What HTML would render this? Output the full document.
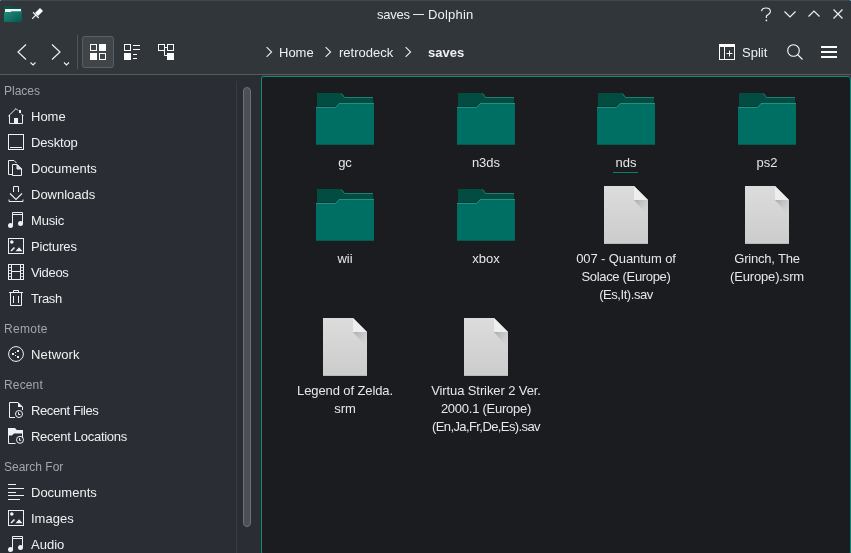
<!DOCTYPE html>
<html><head><meta charset="utf-8">
<style>
html,body{margin:0;padding:0;}
body{width:851px;height:553px;overflow:hidden;position:relative;background:#31363b;font-family:"Liberation Sans",sans-serif;color:#eff0f1;font-size:13px;}
.a{position:absolute;}
.t{position:absolute;white-space:nowrap;line-height:1;will-change:transform;}
svg{position:absolute;overflow:visible;}
#side{position:absolute;left:0;top:75px;width:261px;height:478px;background:#2a2d34;}
#view{position:absolute;left:261px;top:76px;width:588px;height:477px;border:1px solid #0d8c7b;border-radius:3px;background:#1b1c20;}
.hdr{color:#a2a7ab;}
.lbl{will-change:transform;position:absolute;text-align:center;width:140px;line-height:18px;white-space:nowrap;color:#e6e7e8;}
</style></head><body>
<svg width="0" height="0" style="position:absolute">
 <defs>
  <linearGradient id="fg" x1="0" y1="0" x2="0" y2="1"><stop offset="0" stop-color="#dcdcdc"/><stop offset="1" stop-color="#cccccc"/></linearGradient>
  <linearGradient id="sh" x1="0" y1="0" x2="1" y2="1"><stop offset="0" stop-color="#a8a8a8"/><stop offset="1" stop-color="#d4d4d4" stop-opacity="0"/></linearGradient>
  <symbol id="folder" viewBox="0 0 58 52">
   <path d="M1 0H25.5L28.5 4H57V52H1z" fill="#024c42"/>
   <path d="M25.5 0.5L28.5 4.5H57" fill="none" stroke="#237e72" stroke-width="1"/>
   <path d="M0 14H19.3L22.8 10H58V52H0z" fill="#006f63"/>
   <path d="M0 14.5H19.5L23 10.5H58" fill="none" stroke="#2a8d80" stroke-width="1"/>
   <path d="M0 13.5H19L22.5 9.5" fill="none" stroke="#013d35" stroke-width="1"/>
   <rect x="0" y="51" width="58" height="1" fill="#035a50"/>
  </symbol>
  <symbol id="file" viewBox="0 0 44 58">
   <path d="M0 0H30L44 14V58H0z" fill="url(#fg)"/>
   <path d="M30 14H44V30z" fill="url(#sh)"/>
   <path d="M30 0L44 14H30z" fill="#eeeeee"/>
   <rect x="0" y="57" width="44" height="1" fill="#b8b8b8"/>
  </symbol>
 </defs>
</svg>

<!-- top outline -->
<div class="a" style="left:0;top:0;width:851px;height:1px;background:#42474d"></div>
<div class="a" style="left:0;top:0;width:1px;height:1px;background:#5592b8"></div>
<div class="a" style="left:850px;top:0;width:1px;height:1px;background:#6aa3bd"></div>

<!-- title bar -->
<svg style="left:4px;top:6px" width="18" height="16" viewBox="0 0 18 16">
  <defs><linearGradient id="tf" x1="0" y1="0" x2="1" y2="1"><stop offset="0" stop-color="#1f8e7e"/><stop offset="1" stop-color="#06564c"/></linearGradient></defs>
  <path d="M0 0h8l1 1.2H18V16H0z" fill="#0a5349"/>
  <rect x="1" y="3" width="16" height="3.2" fill="#f2f2f2"/>
  <path d="M0 6.3H6.5L7.5 5.2H18V16H0z" fill="url(#tf)"/>
</svg>
<svg style="left:28px;top:4px" width="20" height="20" viewBox="0 0 20 20">
  <path d="M9.98 11.98L7.02 9.02L12.02 4.02L14.98 6.98z" fill="#fcfcfc"/>
  <path d="M5.4 8.6L10.4 13.6" stroke="#fcfcfc" stroke-width="1.3" stroke-linecap="round"/>
  <path d="M7.8 11.2L4.6 14.4" stroke="#fcfcfc" stroke-width="1.2" stroke-linecap="round"/>
</svg>
<div class="t" style="left:377px;top:8px;font-size:13px;letter-spacing:-0.25px">saves</div>
<div class="a" style="left:413px;top:14px;width:11px;height:1px;background:#e3e5e6"></div>
<div class="t" style="left:428px;top:8px;font-size:13px;letter-spacing:0.2px">Dolphin</div>
<svg style="left:760px;top:7px" width="12" height="15" viewBox="0 0 12 15"><path d="M1.6 4.2C1.6 2 3.6 1 6 1C8.5 1 10.4 2.3 10.4 4.5C10.4 6.8 7.9 7.5 6.4 9V11" fill="none" stroke="#eff0f1" stroke-width="1.15"/><circle cx="6.4" cy="13.4" r="0.85" fill="#eff0f1"/></svg>
<svg style="left:784px;top:11px" width="12" height="7" viewBox="0 0 12 7"><path d="M0.5 0.5L6 6 11.5 0.5" fill="none" stroke="#eff0f1" stroke-width="1.2"/></svg>
<svg style="left:808px;top:10px" width="12" height="7" viewBox="0 0 12 7"><path d="M0.5 6.5L6 1 11.5 6.5" fill="none" stroke="#eff0f1" stroke-width="1.2"/></svg>
<svg style="left:833px;top:9px" width="10" height="10" viewBox="0 0 10 10"><path d="M0.5 0.5L9.5 9.5M9.5 0.5L0.5 9.5" fill="none" stroke="#eff0f1" stroke-width="1.2"/></svg>

<!-- toolbar -->
<svg style="left:17px;top:44px" width="20" height="22" viewBox="0 0 20 22">
  <path d="M9 0.5L1 8l8 7.5" fill="none" stroke="#eff0f1" stroke-width="1.2"/>
  <path d="M13.5 18.5L16 21l2.5-2.5" fill="none" stroke="#eff0f1" stroke-width="1.1"/>
</svg>
<svg style="left:51px;top:44px" width="20" height="22" viewBox="0 0 20 22">
  <path d="M1 0.5L9 8l-8 7.5" fill="none" stroke="#eff0f1" stroke-width="1.2"/>
  <path d="M13 18.5L15.5 21l2.5-2.5" fill="none" stroke="#eff0f1" stroke-width="1.1"/>
</svg>
<div class="a" style="left:77px;top:35px;width:1px;height:34px;background:#50555a"></div>
<div class="a" style="left:82px;top:36px;width:30px;height:30px;border:1px solid #5b5f64;border-radius:3px;background:#40454a"></div>
<svg style="left:90px;top:44px" width="16" height="16" viewBox="0 0 16 16">
  <rect x="0.5" y="0.5" width="6" height="6" fill="none" stroke="#fcfcfc"/>
  <rect x="9" y="0" width="7" height="7" fill="#fcfcfc"/>
  <rect x="0" y="9" width="7" height="7" fill="#fcfcfc"/>
  <rect x="9.5" y="9.5" width="6" height="6" fill="none" stroke="#fcfcfc"/>
</svg>
<svg style="left:124px;top:44px" width="16" height="16" viewBox="0 0 16 16">
  <rect x="0.5" y="0.5" width="6" height="6" fill="none" stroke="#fcfcfc"/>
  <rect x="9" y="1" width="7" height="1" fill="#fcfcfc"/>
  <rect x="9" y="5" width="7" height="1" fill="#fcfcfc"/>
  <rect x="0" y="9" width="7" height="7" fill="#fcfcfc"/>
  <rect x="9" y="10" width="4" height="1" fill="#fcfcfc"/>
  <rect x="9" y="14" width="4" height="1" fill="#fcfcfc"/>
</svg>
<svg style="left:158px;top:44px" width="16" height="16" viewBox="0 0 16 16">
  <rect x="0.5" y="0.5" width="6" height="6" fill="none" stroke="#fcfcfc"/>
  <rect x="9.5" y="0.5" width="6" height="6" fill="none" stroke="#fcfcfc"/>
  <path d="M6.5 3.5h3M6.5 3.5v8h3" fill="none" stroke="#fcfcfc"/>
  <rect x="9" y="9" width="7" height="7" fill="#fcfcfc"/>
</svg>

<!-- breadcrumb -->
<svg style="left:266px;top:46px" width="7" height="12" viewBox="0 0 7 12"><path d="M0.6 1.2L5.6 6 0.6 10.8" fill="none" stroke="#e6e8e9" stroke-width="1.15"/></svg>
<div class="t" style="left:279px;top:46px">Home</div>
<svg style="left:325px;top:46px" width="7" height="12" viewBox="0 0 7 12"><path d="M0.6 1.2L5.6 6 0.6 10.8" fill="none" stroke="#e6e8e9" stroke-width="1.15"/></svg>
<div class="t" style="left:339px;top:46px">retrodeck</div>
<svg style="left:405px;top:46px" width="7" height="12" viewBox="0 0 7 12"><path d="M0.6 1.2L5.6 6 0.6 10.8" fill="none" stroke="#e6e8e9" stroke-width="1.15"/></svg>
<div class="t" style="left:428px;top:46px;font-weight:bold">saves</div>

<!-- split / search / menu -->
<svg style="left:719px;top:44px" width="16" height="16" viewBox="0 0 16 16">
  <rect x="0.5" y="0.5" width="15" height="15" fill="none" stroke="#fcfcfc"/>
  <rect x="0" y="0" width="16" height="3" fill="#fcfcfc"/>
  <rect x="5" y="3" width="1" height="13" fill="#fcfcfc"/>
  <path d="M10.5 6.5v6M7.5 9.5h6" stroke="#fcfcfc"/>
</svg>
<div class="t" style="left:742px;top:46px">Split</div>
<svg style="left:787px;top:44px" width="16" height="16" viewBox="0 0 16 16">
  <circle cx="6.5" cy="6.5" r="5.8" fill="none" stroke="#fcfcfc" stroke-width="1.1"/>
  <path d="M10.5 10.5L15.5 15.5" stroke="#fcfcfc" stroke-width="1.1"/>
</svg>
<svg style="left:821px;top:45px" width="16" height="14" viewBox="0 0 16 14">
  <rect x="0" y="1" width="16" height="2" fill="#fcfcfc"/>
  <rect x="0" y="6" width="16" height="2" fill="#fcfcfc"/>
  <rect x="0" y="11" width="16" height="2" fill="#fcfcfc"/>
</svg>

<!-- toolbar bottom line -->
<div class="a" style="left:0;top:74px;width:851px;height:1px;background:#575b60"></div>

<!-- sidebar -->
<div id="side"></div>
<div class="a" style="left:236px;top:81px;width:1px;height:472px;background:#393d42"></div>
<div class="a" style="left:243px;top:87px;width:6px;height:438px;border:1px solid #6d7175;border-radius:4px;background:#4c5055"></div>

<!-- sidebar icons -->
<svg style="left:8px;top:108px" width="16" height="16" viewBox="0 0 16 16" fill="none" stroke="#eff0f1" stroke-width="1"><path d="M0.3 8.2L8 0.6L10 2.6M13.2 5.8L15.4 8"/><path d="M1.5 7V15.5H14.5V7"/><rect x="6" y="10" width="4" height="6" fill="#eff0f1" stroke="none"/><rect x="11" y="2" width="2" height="3" fill="#eff0f1" stroke="none"/></svg>
<svg style="left:8px;top:134px" width="16" height="16" viewBox="0 0 16 16" fill="none" stroke="#eff0f1" stroke-width="1"><rect x="0.5" y="0.5" width="15" height="15"/><path d="M2 13.5H14"/></svg>
<svg style="left:8px;top:160px" width="16" height="16" viewBox="0 0 16 16" fill="none" stroke="#eff0f1" stroke-width="1"><path d="M4.5 14.5H0.5V0.5H6L8.5 3"/><path d="M4.5 15.5V4.5H9L13.5 9V15.5z"/><path d="M9 4.5V9H13.5z" fill="#eff0f1" fill-opacity="0.85"/></svg>
<svg style="left:8px;top:186px" width="16" height="16" viewBox="0 0 16 16" fill="none" stroke="#eff0f1" stroke-width="1"><path d="M5.5 6V0.5H10.5V6"/><path d="M2 7.5L8 13.5L14 7.5" stroke-width="1.1"/><path d="M1 13.5V15.5H15V13.5"/></svg>
<svg style="left:8px;top:212px" width="16" height="16" viewBox="0 0 16 16" fill="none" stroke="#eff0f1" stroke-width="1"><path d="M4.5 13.5V0.5H14.5V11.5M4.5 2.5H14.5"/><circle cx="2.5" cy="13.5" r="2.5" fill="#eff0f1" stroke="none"/><circle cx="12.5" cy="11.5" r="2.5" fill="#eff0f1" stroke="none"/></svg>
<svg style="left:8px;top:238px" width="16" height="16" viewBox="0 0 16 16" fill="none" stroke="#eff0f1" stroke-width="1"><rect x="0.5" y="0.5" width="15" height="15"/><circle cx="3.8" cy="4" r="1.8" fill="#eff0f1" stroke="none"/><path d="M3 13L6.5 9.5" stroke-width="1.6"/><path d="M7.5 13.3L11 9.3L14.5 13.3z" fill="#eff0f1" stroke="none"/></svg>
<svg style="left:8px;top:264px" width="16" height="16" viewBox="0 0 16 16" fill="none" stroke="#eff0f1" stroke-width="1"><rect x="0.5" y="0.5" width="15" height="15"/><path d="M3.5 0.5V15.5M12.5 0.5V15.5M3.5 7.5H12.5"/><path d="M1 3.5H3M1 6.5H3M1 9.5H3M1 12.5H3M13 3.5H15M13 6.5H15M13 9.5H15M13 12.5H15" stroke-width="0.8"/></svg>
<svg style="left:8px;top:290px" width="16" height="16" viewBox="0 0 16 16" fill="none" stroke="#eff0f1" stroke-width="1"><path d="M1 2.5H15"/><path d="M5.5 2V0.5H10.5V2"/><path d="M2.5 3V15.5H13.5V3"/><path d="M5.5 6V13M10.5 6V13"/></svg>
<svg style="left:8px;top:346px" width="16" height="16" viewBox="0 0 16 16" fill="none" stroke="#eff0f1" stroke-width="1"><circle cx="8" cy="8" r="7.4"/><g fill="#eff0f1" stroke="none"><rect x="4" y="7" width="2" height="2"/><rect x="9" y="4" width="2" height="2"/><rect x="9" y="10" width="2" height="2"/><rect x="7" y="6" width="1" height="1"/><rect x="7" y="9" width="1" height="1"/></g></svg>
<svg style="left:8px;top:402px" width="16" height="16" viewBox="0 0 16 16" fill="none" stroke="#eff0f1" stroke-width="1"><path d="M7 15.5H1.5V0.5H10L14.5 5V8"/><path d="M10 0.5V5H14.5z" fill="#eff0f1" stroke="none"/><circle cx="11" cy="12" r="3.5"/><path d="M10.5 10.2V12.5H12.3"/></svg>
<svg style="left:8px;top:428px" width="16" height="16" viewBox="0 0 16 16" fill="none" stroke="#eff0f1" stroke-width="1"><path d="M0 0H7L8.8 2H15V5.5H6L4 7.5H0z" fill="#eff0f1" stroke="none"/><path d="M0.5 7V15.5H7.5M14.5 5V10"/><circle cx="12" cy="11.8" r="3.5"/><path d="M11.5 10V12.3H13.2"/></svg>
<svg style="left:8px;top:484px" width="16" height="16" viewBox="0 0 16 16" fill="none" stroke="#eff0f1" stroke-width="1"><path d="M0 0.5H8M0 4.5H16M0 8.5H8M0 11.5H16M0 15.5H12"/></svg>
<svg style="left:8px;top:510px" width="16" height="16" viewBox="0 0 16 16" fill="none" stroke="#eff0f1" stroke-width="1"><rect x="0.5" y="0.5" width="15" height="15"/><circle cx="3.8" cy="4" r="1.8" fill="#eff0f1" stroke="none"/><path d="M3 13L6.5 9.5" stroke-width="1.6"/><path d="M7.5 13.3L11 9.3L14.5 13.3z" fill="#eff0f1" stroke="none"/></svg>
<svg style="left:8px;top:536px" width="16" height="16" viewBox="0 0 16 16" fill="none" stroke="#eff0f1" stroke-width="1"><path d="M4.5 13.5V0.5H14.5V11.5M4.5 2.5H14.5"/><circle cx="2.5" cy="13.5" r="2.5" fill="#eff0f1" stroke="none"/><circle cx="12.5" cy="11.5" r="2.5" fill="#eff0f1" stroke="none"/></svg>
<div class="t hdr" style="left:4px;top:85px;font-size:12px">Places</div>
<div class="t" style="left:31px;top:110px">Home</div>
<div class="t" style="left:31px;top:136px;letter-spacing:-0.15px">Desktop</div>
<div class="t" style="left:31px;top:162px">Documents</div>
<div class="t" style="left:31px;top:188px">Downloads</div>
<div class="t" style="left:31px;top:214px;letter-spacing:-0.2px">Music</div>
<div class="t" style="left:31px;top:240px;letter-spacing:-0.15px">Pictures</div>
<div class="t" style="left:31px;top:266px;letter-spacing:-0.35px">Videos</div>
<div class="t" style="left:31px;top:292px;letter-spacing:-0.4px">Trash</div>
<div class="t hdr" style="left:4px;top:323px;font-size:12px;letter-spacing:0.3px">Remote</div>
<div class="t" style="left:31px;top:348px;letter-spacing:0.15px">Network</div>
<div class="t hdr" style="left:4px;top:379px;font-size:12px;letter-spacing:0.15px">Recent</div>
<div class="t" style="left:31px;top:404px;letter-spacing:-0.4px">Recent Files</div>
<div class="t" style="left:31px;top:430px;letter-spacing:-0.28px">Recent Locations</div>
<div class="t hdr" style="left:4px;top:461px;font-size:12px">Search For</div>
<div class="t" style="left:31px;top:486px">Documents</div>
<div class="t" style="left:31px;top:512px">Images</div>
<div class="t" style="left:31px;top:538px">Audio</div>

<!-- main view -->
<div id="view"></div>
<svg style="left:316px;top:93px" width="58" height="52"><use href="#folder"/></svg>
<div class="lbl" style="left:275px;top:154px">gc</div>
<svg style="left:457px;top:93px" width="58" height="52"><use href="#folder"/></svg>
<div class="lbl" style="left:416px;top:154px">n3ds</div>
<svg style="left:597px;top:93px" width="58" height="52"><use href="#folder"/></svg>
<div class="lbl" style="left:556px;top:154px">nds</div>
<svg style="left:738px;top:93px" width="58" height="52"><use href="#folder"/></svg>
<div class="lbl" style="left:697px;top:154px">ps2</div>
<div class="a" style="left:613px;top:172px;width:25px;height:1px;background:#0a7d6f"></div>
<svg style="left:316px;top:189px" width="58" height="52"><use href="#folder"/></svg>
<div class="lbl" style="left:275px;top:250px">wii</div>
<svg style="left:457px;top:189px" width="58" height="52"><use href="#folder"/></svg>
<div class="lbl" style="left:416px;top:250px">xbox</div>
<svg style="left:604px;top:186px" width="44" height="58"><use href="#file"/></svg>
<div class="lbl" style="left:556px;top:250px"><span style="letter-spacing:-0.1px">007 - Quantum of</span><br><span style="letter-spacing:-0.33px">Solace (Europe)</span><br><span style="letter-spacing:-0.45px">(Es,It).sav</span></div>
<svg style="left:745px;top:186px" width="44" height="58"><use href="#file"/></svg>
<div class="lbl" style="left:697px;top:250px"><span style="letter-spacing:-0.2px">Grinch, The</span><br><span style="letter-spacing:-0.15px">(Europe).srm</span></div>
<svg style="left:323px;top:318px" width="44" height="58"><use href="#file"/></svg>
<div class="lbl" style="left:275px;top:382px"><span style="letter-spacing:-0.1px">Legend of Zelda.</span><br>srm</div>
<svg style="left:464px;top:318px" width="44" height="58"><use href="#file"/></svg>
<div class="lbl" style="left:416px;top:382px"><span style="letter-spacing:-0.1px">Virtua Striker 2 Ver.</span><br><span style="letter-spacing:-0.25px">2000.1 (Europe)</span><br><span style="letter-spacing:-0.6px">(En,Ja,Fr,De,Es).sav</span></div>

</body></html>
